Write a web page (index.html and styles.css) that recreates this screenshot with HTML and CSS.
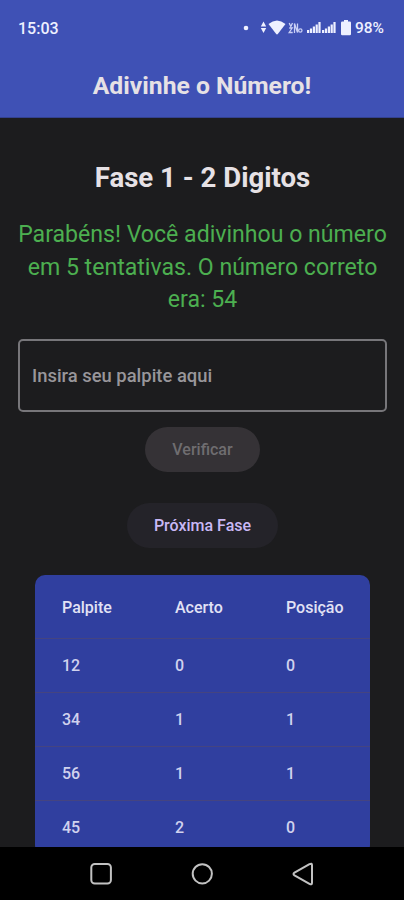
FILE: index.html
```html
<!DOCTYPE html>
<html lang="pt-br">
<head>
    <meta charset="UTF-8">
    <meta name="viewport" content="width=device-width, initial-scale=1.0">
    <title>Adivinhe o Número!</title>
    <link rel="stylesheet" href="styles.css">
</head>
<body>
    <header class="app-bar">
        <div class="status-bar">
            <span class="clock">15:03</span>
            <svg class="status-icons" viewBox="0 0 110 16" width="110" height="16" fill="#eef0ff">
                <circle cx="4" cy="8" r="2.300"/>
                <path d="M18.800 6.500L21.500 1.500l2.700 5zM18.800 8h5.400L21.500 13z"/>
                <path d="M26.500 4Q35 -3 43.500 4L36 13.800Q35 15 34 13.800z"/>
                <g fill="none" stroke="#c9cff5" stroke-width="1.300">
                    <path d="M47.200 3l1.600 3.500L50.500 3M47.200 8h3l-3 4.500h3.500M52.500 13V3.500l3 9V3.500"/>
                    <circle cx="58.300" cy="10.500" r="1.700"/>
                </g>
                <path d="M65 10h2.200v3H65zM67.900 8.500h2.200V13h-2.200zM70.800 6.500H73V13h-2.200zM73.600 4.500h2.200V13h-2.200zM76.400 2h2.200v11h-2.200z"/>
                <path d="M80 10h2.200v3H80zM82.900 8.500h2.200V13h-2.200zM85.800 6.500H88V13h-2.200zM88.600 4.500h2.200V13h-2.200zM91.400 2h2.200v11h-2.200z"/>
                <path d="M102 0h4v1.500h1.800a1.200 1.200 0 0 1 1.200 1.200V14a1.200 1.200 0 0 1-1.200 1.200h-7.600A1.200 1.200 0 0 1 99 14V2.700a1.200 1.200 0 0 1 1.200-1.200H102z"/>
            </svg>
            <span class="battery">98%</span>
        </div>
        <h1 class="app-title">Adivinhe o Número!</h1>
    </header>

    <main class="content">
        <h2 class="phase">Fase 1 - 2 Digitos</h2>
        <p class="message">Parabéns! Você adivinhou o número em 5 tentativas. O número correto era: 54</p>
        <input class="guess" type="text" placeholder="Insira seu palpite aqui">
        <button class="btn btn-check" disabled>Verificar</button>
        <button class="btn btn-next">Próxima Fase</button>
        <table class="history">
            <thead>
                <tr><th>Palpite</th><th>Acerto</th><th>Posição</th></tr>
            </thead>
            <tbody>
                <tr><td>12</td><td>0</td><td>0</td></tr>
                <tr><td>34</td><td>1</td><td>1</td></tr>
                <tr><td>56</td><td>1</td><td>1</td></tr>
                <tr><td>45</td><td>2</td><td>0</td></tr>
            </tbody>
        </table>
    </main>

    <nav class="nav-bar">
        <svg viewBox="0 0 24 24"><rect x="2.300" y="2" width="19.600" height="19.600" rx="3.500"/></svg>
        <svg viewBox="0 0 24 24"><circle cx="12.300" cy="11.800" r="9.600"/></svg>
        <svg viewBox="0 0 24 24"><path d="M18.500 2.200Q21 0.800 21 3v18q0 2.200-2.500 0.800L3.500 13.300Q1.500 12 3.500 10.700z"/></svg>
    </nav>
</body>
</html>
```

FILE: styles.css
```css
* {
    margin: 0;
    padding: 0;
    box-sizing: border-box;
    font-family: Roboto, sans-serif;
}
body {
    height: 100vh;
    display: flex;
    flex-direction: column;
    overflow: hidden;
    background: #1c1c1e;
    color: #e6e1e5;
}
.app-bar {
    height: 118px;
    flex-shrink: 0;
    background: #3f51b5;
    border-bottom: 1px solid #33418f;
}
.status-bar {
    height: 56px;
    padding: 0 20px 0 18px;
    display: flex;
    align-items: center;
    color: #eef0ff;
    font-size: 16px;
    font-weight: 500;
}
.status-icons {
    margin-left: auto;
    margin-right: 3px;
}
.battery {
    font-size: 15.5px;
}
.app-title {
    font-size: 24.7px;
    font-weight: 700;
    line-height: 59px;
    text-align: center;
}
.content {
    flex: 1;
    min-height: 0;
    overflow: hidden;
    padding: 41px 17px 0 18px;
    display: flex;
    flex-direction: column;
    align-items: center;
}
.phase {
    font-size: 27.6px;
    font-weight: 700;
    line-height: 37px;
    flex-shrink: 0;
}
.message {
    width: 376px;
    margin-top: 23px;
    color: #4caf50;
    font-size: 23.1px;
    line-height: 32.6px;
    text-align: center;
    flex-shrink: 0;
}
.guess {
    width: 100%;
    height: 73px;
    flex-shrink: 0;
    margin-top: 22px;
    padding: 0 12px;
    background: transparent;
    border: 2px solid #77767a;
    border-radius: 5px;
    color: #e6e1e5;
    font-size: 18.4px;
    font-weight: 500;
}
.guess::placeholder {
    color: #98969a;
}
.btn {
    height: 45px;
    flex-shrink: 0;
    border: none;
    border-radius: 23px;
    font-size: 16px;
    font-weight: 500;
}
.btn-check {
    width: 115px;
    margin-top: 15px;
    background: #353236;
    color: #6f6d70;
}
.btn-next {
    width: 151px;
    margin-top: 31px;
    padding-top: 1px;
    background: #242329;
    color: #c9b8f5;
}
.history {
    width: 335px;
    flex-shrink: 0;
    margin-top: 27px;
    table-layout: fixed;
    border-spacing: 0;
    background: #303f9f;
    border-radius: 10px;
    font-size: 16px;
    text-align: left;
}
.history th,
.history td {
    height: 54px;
    padding-left: 27px;
    border-bottom: 1px solid #454480;
    font-weight: 500;
    color: #d0d2ee;
}
.history th {
    height: 64px;
    padding-top: 2px;
    color: #e2e2f5;
}
.history th:first-child {
    width: 113px;
}
.history th:nth-child(2) {
    width: 111px;
}
.nav-bar {
    height: 53px;
    flex-shrink: 0;
    padding: 0 89px 0 89px;
    background: #000;
    display: flex;
    align-items: center;
    justify-content: space-between;
}
.nav-bar svg {
    width: 24px;
    height: 24px;
    fill: none;
    stroke: #c2c2c2;
    stroke-width: 2;
}
```
